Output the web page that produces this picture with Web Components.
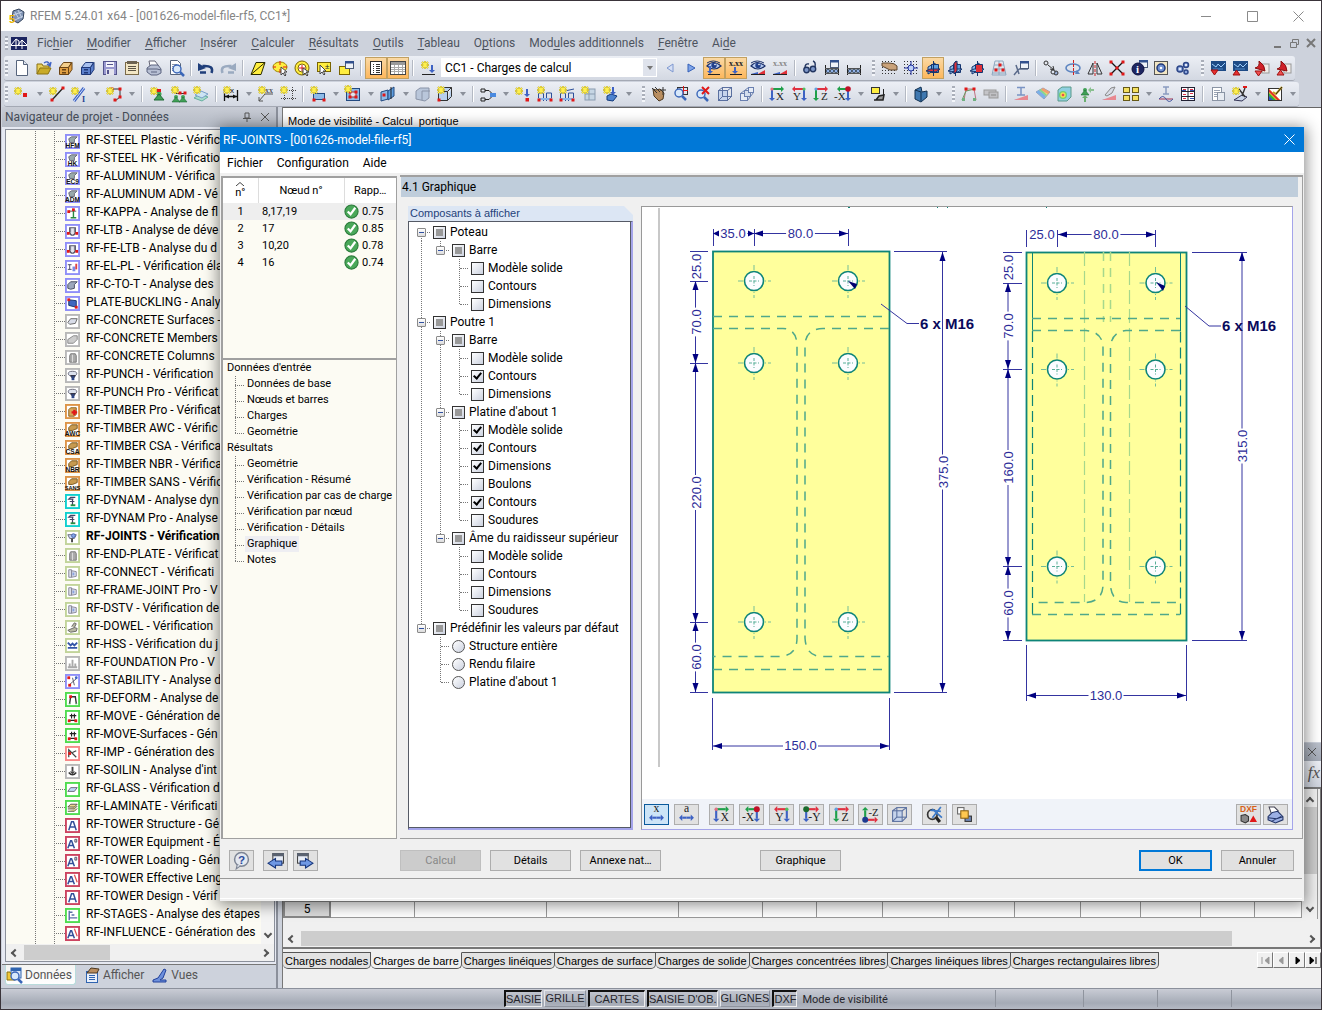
<!DOCTYPE html>
<html lang="fr">
<head>
<meta charset="utf-8">
<title>RFEM 5.24.01 x64</title>
<style>
html,body{margin:0;height:100%}
body{font:12px/18px Roboto,"Open Sans",sans-serif;color:#000;overflow:hidden}
</style>
</head>
<body>
<app-window></app-window>
<script>
const define=(tag,css,html,ready)=>customElements.define(tag,class extends HTMLElement{
  constructor(){super();this.attachShadow({mode:'open'});}
  connectedCallback(){
    this.shadowRoot.innerHTML=`<style>:host,*{box-sizing:border-box}${css}</style>`+(typeof html==='function'?html(this):html);
    if(ready)ready(this.shadowRoot,this);
  }
});

/* ---------- icon drawing helpers ---------- */
const R=(x,y,w,h,f,s)=>`<rect x="${x}" y="${y}" width="${w}" height="${h}" fill="${f||'none'}"${s?` stroke="${s}"`:''}/>`;
const P=(d,s,f,w)=>`<path d="${d}" fill="${f||'none'}"${s?` stroke="${s}" stroke-width="${w||1}"`:''}/>`;
const C=(x,y,r,f,s,w)=>`<circle cx="${x}" cy="${y}" r="${r}" fill="${f||'none'}"${s?` stroke="${s}" stroke-width="${w||1}"`:''}/>`;
const T=(x,y,t,sz,f,fam,b,a)=>`<text x="${x}" y="${y}" font-size="${sz}" fill="${f||'#222'}" font-family="${fam||'Liberation Sans'}" font-weight="${b||400}" text-anchor="${a||'start'}">${t}</text>`;
const star=(x,y)=>{const d=`M${x} ${y-4}v8M${x-4} ${y}h8M${x-3} ${y-3}l6 6M${x+3} ${y-3}l-6 6`;return P(d,'#a89838','none',2)+P(d,'#fff04a','none',1.2);};
const nd=(x,y)=>R(x-1.5,y-1.5,3,3,'#e01818');
const sup=(x,y)=>C(x,y-3,2,'#3fa055')+P(`M${x} ${y-3}l4 5h-8z`,'#1f6a35','#3fa055',.6);
const hA=(x1,x2,y,c)=>{const k=x2>x1?-3:3;return P(`M${x1} ${y}H${x2+k}`,c,'none',2)+P(`M${x2} ${y}l${k} -3v6z`,'',c);};
const vA=(x,y1,y2,c)=>{const k=y2>y1?-3:3;return P(`M${x} ${y1}V${y2+k}`,c,'none',2)+P(`M${x} ${y2}l-3 ${k}h6z`,'',c);};
const gr='#1fa04a',bl='#3d62c4',rd='#e03040',se='Liberation Serif';
const lens=(x,y)=>P(`M${x+3} ${y+3}l4 4`,'#3a66b8','none',2.5)+C(x,y,4,'#d8e8fa','#3a66b8',1.4);
const box=(f,e)=>P('M1.5 5.5h9v9h-9zM1.5 5.5l4-4h9l-4 4M14.5 1.5v9l-4 4',e,f);
const loads=()=>P('M1.5 5v10M14.5 5v10','#222')+P('M1 13.5h14M1 8.500h14','#555')+C(4,11,1.8,'#8fb0e8','#234',.8)+C(8,11,1.8,'#8fb0e8','#234',.8)+C(12,11,1.8,'#8fb0e8','#234',.8);
const eye=()=>P('M1 6q6-7 14 0q-7 6-14 0z','#1a2f6a','#b8ccf2',1.2)+C(8,5.5,2.7,'#22408c')+C(9,4.5,.8,'#fff')+P('M1 3q6-4 13 0','#1a2f6a');
const ramp=y=>P(`M1 ${y}l7-2v2z`,'','#3d62c4')+P(`M8 ${y}h7v-4z`,'','#e03038')+P(`M1 ${y+.5}h14`,'#222');
const ramp2=y=>P(`M1 ${y}h14l-7-1z`,'','#3d62c4')+P(`M1 ${y}l14-5v5z`,'','#e88890');
const axes3=f=>P('M3 7l7-4v7l-7 4z','#16346e','#8fc0ee')+P('M6.500 4.500h7v8h-7z','#16346e','#5e9ee0')+P('M1 11l4-2h10l-4 3z','#16346e',f)+P('M8.500 1v15','#16346e');
const dots=()=>{let o='';for(let i=1;i<16;i+=3)for(let j=1;j<16;j+=3)o+=R(i,j,1,1,'#333');return o;};
const portal=()=>P('M1.500 15V7h5v8M9.500 15V7h5v8','#2c4f9a')+P('M1 13h14','#88b3e8','none',2)+nd(2,14)+nd(14,14);
const cab=(a,b,c)=>P('M1.5 7.5l4-5h8l-3 5z',c,a)+P('M1.5 7.5h9v7h-9z',c,b)+P('M10.5 7.5l3.5-5v7l-3.5 5z',c,b)+R(4,9,4,1.5,c)+R(4,12,4,1.5,c);
const win=(x,y)=>R(x+.5,y+.5,8,7,'#eef2f8','#4a5a78')+R(x,y,9,2.5,'#31508e');
const bscreen=()=>R(1,1,15,10,'#1d4a86')+P('M2 4l4 3 2-3 3 3 4-4','#9fd0ff')+P('M3 9h10','#4f88c8');
const I={
 'axis-x':()=>hA(3,15,3,gr)+vA(3,3,15,bl)+T(7,14,'X',11,'#222',se)+C(3,3,1.6,'#e07080'),
 'axis-y':()=>hA(13,1,3,rd)+vA(13,3,15,bl)+T(2,14,'Y',11,'#222',se)+C(13,3,1.6,'#4fc060'),
 'axis-z':()=>hA(3,15,3,rd)+vA(3,3,15,gr)+T(8,14,'Z',11,'#222',se)+C(3,3,1.6,'#60a0e0'),
 'axis-minus-x':()=>hA(13,2,3,gr)+vA(13,4,15,bl)+T(-1,14,'-X',11,'#222',se)+C(13,3,2.8,'#c01028'),
 'axis-minus-y':()=>hA(4,15,3,rd)+vA(3,4,15,bl)+T(5,14,'-Y',11,'#222',se)+C(3,3,2.8,'#1a6a2c'),
 'axis-minus-z':()=>vA(3,13,1,gr)+hA(3,15,13,rd)+T(6,9,'-Z',10,'#222',se)+C(3,13,2.8,'#1d3a90'),
 'app':()=>P('M4 3l6-2 5 3-1 7-5 4-6-3z','#33435c','#7f93b4')+P('M6 4l4 7M9 2l4 8M4 7l9-3M6 12l8-4','#c6d2e6')+T(0,15,'5',11,'#e8b400','Liberation Sans',700),
 'bridge':()=>R(0,2,16,13,'#1c2560')+P('M0 10.500h16M5 14V4M11 14V5M0 10l5-6 3 2M7 10l4-5 5 5M8 6V10','#fff'),
 'new-file':()=>P('M2.500 .5h7l4 4v11h-11z','#56647c','#fff')+P('M9.500 .5v4h4','#56647c','#dde4f0'),
 'open':()=>P('M1 14V4h5l1 2h6v3','#8a7212','#e8cf5a')+P('M1 14l3-6h11l-3 6z','#8a7212','#c9ab28')+P('M8 3q4-3 6 2M15 2l-1 4-3-2','#3d62c4','none',1.4),
 'archive-open':()=>cab('#f4cf8c','#e0a044','#6b4414'),
 'archive-save':()=>cab('#a8c0ee','#5c80cc','#1f3878'),
 'save':()=>R(1.5,1.5,13,13,'#9a9ad0','#54548c')+R(4,2,8,5,'#f4f4fb')+R(4,9,8,6,'#e4e4ee')+R(5,10,2,4,'#54548c')+P('M5 4.500h6','#54548c'),
 'clipboard':()=>R(1.5,2.5,13,12,'#f2e6c4','#7a6a48')+R(3,1,10,3,'#6c6250')+P('M4 6.500h8M4 8.500h8M4 10.500h8','#5b5344'),
 'print':()=>P('M4 6L3 1h6l3 4','#667','#fff')+P('M1 8l4-3h7l3 4v4l-4 2H5l-4-3z','#5c6480','#b8c0d4')+P('M1 9h10l4 1M5 12h6','#5c6480'),
 'preview':()=>P('M2.5 .5h7l3 3v11h-10z','#56647c','#fff')+P('M4 4.500h5M4 6.500h6M4 8.500h3M4 10.500h3','#8894a8')+lens(9,9),
 'undo':()=>P('M2 12.5h6M13.5 13q3-8-9-7','#1f3e7a','none',2.500)+P('M0 3v8l8-3z','','#1f3e7a'),
 'redo':()=>P('M14 12.500h-6M2.500 13q-3-8 9-7','#9aaac0','none',2.500)+P('M16 3v8l-8-3z','','#9aaac0'),
 'select-para':()=>P('M1 14.500L6 2.500h9l-4 12z','#2a2a00','#ffee40')+P('M1 14.500L15 2.500','#2a2a00'),
 'select-ellipse':()=>`<ellipse cx="8" cy="7" rx="7" ry="5" fill="#ffee40" stroke="#a08400"/>`+P('M8 1v4M8 9v4M1 7h3M11 7h4','#e01818')+P('M9 7v8l2-2 2 3 1-1-2-3h3z','#444','#fff'),
 'select-ring':()=>C(8,8,7,'#ffee40','#7a6400')+C(8,8,4,'#fff','#7a6400')+P('M8 5v6M5 8h6','#e01818')+P('M9 8v7l2-2 2 3 1-1-2-3h3z','#444','#fff'),
 'select-plus':()=>R(1.5,2.5,13,9,'#ffee40','#7a6400')+T(9,9,'±',8)+P('M4 5v9l2-2 2 3 1-1-2-3h3z','#444','#fff'),
 'select-window':()=>R(1.5,6.5,10,8,'#ffee40','#7a6400')+win(7,1),
 'table-nav':()=>R(2.5,1.5,11,13,'#fff','#2c2c2c')+P('M5 4.5h1M8 4.5h4M5 6.5h1M8 6.5h4M5 8.5h1M8 8.5h4M5 10.5h1M8 10.5h4M5 12.5h1M8 12.5h4','#333'),
 'table':()=>R(.5,1.5,15,13,'#fff','#444')+R(1,2,14,3,'#9a9a9a')+P('M1 7.5h14M1 9.5h14M1 11.5h14M4.5 5v9M8.5 5v9M12.5 5v9','#aaa'),
 'new-load':()=>star(5,5)+vA(12,5,13,bl)+P('M2 14.500h13','#222'),
 'prev':()=>P('M11 4L5 8l6 4z','#7e98d0','#d6e0f6'),
 'next':()=>P('M4 4l7 4-7 4z','#3560b8','#7ea4e8'),
 'view-loads':()=>eye()+vA(4,6,14,bl)+P('M2 14.500h12','#222'),
 'view-values':()=>T(8,6,'x.xx',8,'#222',se,700,'middle')+vA(7,7,14,bl)+P('M2 14.500h12','#222'),
 'view-results':()=>eye()+ramp(14),
 'result-values':()=>T(8,6,'x.xx',8,'#888',se,700,'middle')+ramp(14),
 'glasses':()=>C(4.5,10,2.7,'#7c96c8','#223560',1.4)+C(11,9,2.7,'#7c96c8','#223560',1.4)+P('M3 8q0-5 4-4M13 7q1-5-2-6','#223560','none',1.4),
 'loads-window':()=>loads()+win(6,0),
 'loads':()=>loads(),
 'hand-grid':()=>dots()+P('M1 3h7q6 0 8 3v4H9L1 6z','#5c4630','#c9a27a'),
 'grid-snap':()=>dots()+P('M8 1v14M1 8h14','#2233a0')+C(8,8,3,'#bcd0f8','#2233a0'),
 'plane-xy':()=>axes3('#e03038'),'plane-yz':()=>axes3('#8fc0ee')+P('M7 3v11l3-3V1z','#16346e','#e03038'),'plane-xz':()=>axes3('#8fc0ee')+R(7,5,6,7,'#e03038'),
 'grid-red':()=>P('M4 1L1 15h14L12 1zM8 1v14M3 5h10M2 9h12M1 13h14','#8fa8c0')+nd(9,5)+nd(5,10)+nd(12,10),
 'axis-window':()=>P('M6 14L3 5M6 9h9M6 9l-5 6','#5a6a8a','none',1.5)+win(7,1),
 'renumber':()=>C(3,3,2,'none','#333')+P('M5 5l6 5M11 10l-1-4M11 10l-4-1','#333')+C(13,13,2,'#9ab0d8','#333')+C(10,12,2,'#dde4f0','#333'),
 'rotate':()=>`<ellipse cx="8" cy="8" rx="7" ry="4" fill="none" stroke="#5c84c0" stroke-width="1.6"/>`+P('M8.500 0v16','#d02020" stroke-dasharray="3 1')+P('M12 10l3 4-5 0z','','#5c84c0'),
 'mirror':()=>P('M6 3v11H1zM10 3v11h5z','#333','#dfe4ee')+P('M8 1v15','#d02020" stroke-dasharray="3 1'),
 'cross-nodes':()=>P('M2 2l12 12M14 2L2 14','#111','none',1.3)+nd(2,2)+nd(14,2)+nd(2,14)+nd(14,14)+nd(8,8),
 'info':()=>win(8,0)+C(7,9,6,'#1d2560','#0c1040')+T(5,13,'i',11,'#fff',se,700),
 'settings-img':()=>R(1.5,1.5,13,13,'#f2e6c4','#555')+C(8,8,4,'#6f8fd0','#223a78',1.5)+C(8,8,1.3,'#fff'),
 'gears':()=>C(5,9,3,'#8fa8dc','#2c4688',1.5)+C(11,5,2.5,'#8fa8dc','#2c4688',1.5)+C(11,12,2,'#8fa8dc','#2c4688',1.5)+C(5,9,1,'#fff')+C(11,5,1,'#fff'),
 'import-screen':()=>bscreen()+P('M1 10h7l-3.500 5z','#a01010','#e83030'),
 'export-screen':()=>bscreen()+P('M1 15h7l-3.500-5z','#a01010','#e83030'),
 'import-pdf':()=>R(8,4,7,9,'#f0ece8','#999')+P('M5 1q6 4 6 10L1 8q5-1 4-7z','#8a1010','#d02028')+P('M1 11h7l-3.500 5z','#a01010','#f05050'),
 'export-pdf':()=>R(8,4,7,9,'#f0ece8','#999')+P('M5 1q6 4 6 10L1 9q5-1 4-8z','#8a1010','#d02028')+P('M1 15h7l-3.500-5z','#a01010','#f05050'),
 'new-node':()=>star(4,5)+R(9,7,4,4,'#e01818'),
 'new-line':()=>P('M3 14L14 2','#222','none',1.3)+nd(3,14)+nd(14,2)+star(4,5),
 'new-member':()=>P('M3 15L13 2','#3d62c4','none',3)+P('M3 15L13 2','#cfe0ff')+star(4,5)+T(11,16,'I',8,'#1c3c90',se,700),
 'new-poly':()=>P('M6 3h8v8l-5 4','#333')+nd(6,3)+nd(14,3)+nd(14,11)+nd(9,14)+star(4,5),
 'support':()=>C(10,8,2.500,'#3fa055')+P('M10 8l5 6h-10z','#1f6a35','#3fa055')+star(5,5)+R(8,3,4,3,'#e01818'),
 'line-support':()=>P('M5 7.500h10','#333')+nd(9,7)+nd(14,7)+sup(5,14)+sup(12,14)+star(4,4),
 'surface-support':()=>P('M1 12l6-4 8 3-6 4z','#68b0a0','#a8dccc')+P('M2 9l6-4 7 3-6 4z','#78a0c8','#cce4f4')+star(4,4),
 'dimension':()=>P('M1.500 4v11M14.500 4v11M2 10.500h12','#111','none',1.3)+P('M2 10.500l4-2v4zM14 10.500l-4-2v4z','','#111')+star(4,4)+T(7,7,'x',8,'#111'),
 'comment':()=>P('M1 15l6-7h8M1 15v-4M1 15h4','#555')+T(7,7,'xx',8,'#222',se)+star(4,4),
 'frame-grid':()=>P('M4.500 1v14M12.500 1v14M1 4.500h15M1 12.500h15','#444" stroke-dasharray="1 1')+star(4,4),
 'new-surface':()=>R(3.5,7.5,11,6,'#8ebbe8','#234a80')+nd(4,14)+nd(14,14)+star(4,4),
 'opening':()=>R(1.5,2.5,13,12,'#8ebbe8','#234a80')+R(5,6,6,5,'#dfe5ee','#a03030')+nd(5,6)+nd(11,6)+nd(5,11)+nd(11,11)+star(3,3),
 'intersect':()=>P('M1 6l7-2v9l-7 2z','#234a80','#8ebbe8')+P('M8 5l6-4v9l-6 4z','#234a80','#5e9ee0')+P('M11 1v12','#222')+nd(4,9),
 'solid':()=>P('M1 5l4-3h9v10l-4 3-9-2z','#8a94a8','#b9c6da')+P('M7 5h8M7 5v9','#8a94a8'),
 'new-solid':()=>box('#b8d0ee','#333')+star(4,4)+nd(2,14),
 'coupling':()=>P('M1 3h4v3H1zM1 12h4v3H1zM5 4.500h4l3 3M5 13.500h4l3-3','#222')+R(10,7,6,4,'#4a8ae0'),
 'nodal-load':()=>star(4,5)+vA(12,3,11,bl)+R(10.500,12,3.500,3.500,'#e01818'),
 'member-load':()=>portal()+star(4,4),'line-load':()=>portal()+P('M1 6l14-3','#2c4f9a')+star(4,4),
 'free-load':()=>R(4,3,10,11,'#c6d6e4','#8a9cb0')+P('M4 8h10M8 3v11','#8a9cb0')+star(4,4),
 'solid-load':()=>P('M4 10l4-2 6 2-4 5-6-1z','#123a7c','#4f84d0')+vA(10,1,9,bl)+star(4,4),
 'pan':()=>P('M2 3l3 1 4-1 4 4-1 6-4 2-5-5z','#4c3820','#b98e60')+P('M12 1v8M9 4h6M1 2l5 5M4 1l5 5','#333'),
 'zoom-window':()=>R(4.500,1.500,10,7,'none','#333')+P('M10.500 0v8M7 4.500h8','#e01818')+lens(6,7),
 'zoom-reset':()=>lens(6,8)+P('M7 1l7 7M14 1L7 8','#e01818','none',2),
 'cube':()=>R(1.5,4.5,9,10,'#c6d4ec','#5a70a0')+R(5.500,1.500,9,9,'none','#5a70a0')+P('M1.500 4.500l4-3M10.500 4.500l4-3M1.500 14.500l4-4M10.500 14.500l4-4','#5a70a0'),
 'cube-part':()=>R(1.5,7.5,7,7,'#e6ecf6','#6a80b0')+R(5.500,4.500,6,6,'#d4deee','#6a80b0')+R(9.500,1.500,5,5,'#e6ecf6','#6a80b0')+P('M1.500 7.500l8-6M8.500 14.500l6-8','#6a80b0'),
 'visibility':()=>R(1.500,1.500,8,6,'#ffee40','#333')+P('M4 14h9l1-5-5 1-3 4','#222','#999',1.500)+P('M13.500 3v9','#222'),
 'render':()=>P('M2 4l6-3 1 5 5-1v6l-6 5-6-3z','#123050','#3f78b0')+P('M2 4l6 2v9','#123050'),
 'deform':()=>P('M3 14L5 3h8l2 11','#c07080')+P('M1 14L5 5l9-2','#6a9a60')+nd(5,3)+nd(13,3)+R(1,12,3,3,'#70b080')+R(12,12,3,3,'#70b080'),
 'disabled-tool':()=>R(1,4,12,5,'#c4c4c8','#999')+R(6,6,9,6,'#c0c0c4','#999')+P('M8 9h5','#888'),
 'member-forces':()=>P('M4 1.500h8M8 1v8M4 9h8','#7a94c4','none',1.5)+ramp2(14),
 'surface-res':()=>P('M1 6l7-4 7 4-6 7z','#99b','#f0e070')+P('M1 6l3-2 7 6-2 3z','','#7ab0e8')+P('M4 4l2-1 6 6-1 1z','','#80d890')+P('M8 2l7 4-2 2-7-4z','','#f0a070'),
 'solid-res':()=>P('M1 4l4-3h9v10l-4 4H1z','#5a9a8a','#8fd0e0')+C(6,9,4,'#70d070')+C(6,9,2.7,'#f0e050')+C(6,9,1.3,'#e85050'),
 'reaction':()=>sup(6,7)+vA(6,16,9,'#6ab070')+hA(15,9,4,'#8ac090'),
 'section-res':()=>P('M4 9l6-7 4-1-3 6-5 3z','#888','#d8dce6')+ramp2(14),
 'windows':()=>[[.5,1.5],[9.5,1.5],[.5,9.5],[9.5,9.5]].map(a=>R(a[0],a[1],6,5,'#f4e060','#665a18')).join(''),
 'influence':()=>P('M5 1h6M8 1v7M5 8h6','#8a9cc0','none',1.5)+P('M1 13h14','#a03050')+P('M1 13q4-5 7 0t7 0','#4a5aa0'),
 'result-table':()=>R(1.500,1.500,13,13,'#fff','#223')+P('M1 5.500h14M1 10.500h14M8 1v14','#223')+P('M3 3.500h3M10 3.500h3M3 8.500h3M10 7.500h3M3 12.500h3','#e03048')+P('M2 4.500h4M10 4.500h4M10 12.500h4','#3454b0'),
 'report':()=>R(2.5,1.5,9,13,'#fff','#8a94a4')+P('M4 4.500h6M4 6.500h6M4 8.500h4M4 10.500h4','#9aa4b4')+R(7.500,6.500,7,8,'#e8ecf2','#8a94a4'),
 'script':()=>P('M2 14l8-5 5 2-5 4z','#335','#c8d4e8')+P('M7 3l6 8M13 2l-3 8','#333','none',1.4)+P('M11 1h4','#e01818','none',2)+star(4,5),
 'colors':()=>R(1.5,2.5,13,12,'#fff','#333')+P('M2 14V3l11 11z','','#ffe020')+P('M2 14V7l7 7z','','#30b040')+P('M2 14v-4l4 4z','','#3050d0')+P('M2 6V3l11 11h-3z','','#e03030')+P('M15 1L9 8l-3-2','#c8a020','none',2)+P('M15 1L9 8','#222'),
 'data':()=>R(5,1,10,10,'#dbe6f6','#2f64b0')+R(5,1,10,3,'#2f64b0')+P('M1 13V5h3l1 2h4v6z','#8a7212','#f0c838')+lens(9,9),
 'display':()=>R(2.500,4.500,11,11,'#eaf0fa','#2f64b0')+P('M5 8.500h6M5 10.500h6M5 12.500h6','#2f64b0')+P('M3 6l4-5 8 1-2 4z','#4c3820','#b98e60'),
 'views':()=>P('M1 13l5-2 6-9 2 1-3 8-3 2h6v2H1z','#22409a','#6d90dc'),
 'help':()=>C(8,7,6.500,'#e4e8f0','#7c8494',1.4)+P('M4 12l-1 4 4-3','#7c8494','#e4e8f0')+T(8,11,'?',11,'#2b4c9c','Liberation Sans',700,'middle'),
 'go-back':()=>R(5.5,1.5,10,9,'#e8edf6','#444')+R(5,1,11,3,'#5a6270')+P('M8 15v-2.500h6v-4H8V6l-7 4.500z','#16357c','#6f98e4'),
 'go-next':()=>R(.5,1.500,10,9,'#e8edf6','#444')+R(0,1,11,3,'#5a6270')+P('M8 15v-2.500H3v-4h5V6l7 4.500z','#16357c','#6f98e4'),
 'dim-x':()=>T(8,6,'x',11,'#222',se,400,'middle')+hA(8,1,11,bl)+hA(8,15,11,bl),
 'dim-a':()=>T(8,6,'a',11,'#222',se,400,'middle')+hA(8,1,11,bl)+hA(8,15,11,bl),
 'search-off':()=>P('M9 10l4 5','#222','none',3)+C(6,8,4.500,'none','#333',1.600)+P('M6 3l9 8M14 1L6 11M4 4l10 1','#3d7ac8','none',1.600),
 'layers':()=>R(1.500,1.500,6,6,'#fff','#666')+R(8.500,9.500,6,5,'#6f87b8','#333')+R(4.500,4.500,7,7,'#ffc850','#8a6010'),
 'dxf':()=>T(8,6,'DXF',8,'#d86018','Liberation Sans',700,'middle')+P('M1 9l4-1 3 2v4l-3 2-4-2z','#333','#888')+P('M9 15h7l-3.500-6z','','#e01818'),
 'print-blue':()=>P('M4 7L2 1h5l4 4','#445','#fff')+P('M1 10l4-4 5-1 5 5v3l-7 3-7-3z','#223468','#9cb0e4')+P('M1 11l8 1 6-2M5 14l8-4','#223468'),
 'ok':()=>C(8,8,7,'#4aa85a','#2c7c3c',1.200)+P('M4 8l3 3 5-7','#fff','none',2.400),
};
/* module glyphs of the project tree, drawn inside a coloured frame */
const tag=t=>T(8,15,t,t.length>3?6:7,'#111','Liberation Sans',700,'middle');
const G={
 lab:t=>P('M4 5l3-2h6l-3 3v3H5z','#667','#9aa')+tag(t),
 wood:t=>P('M4 6l3-3h6v4l-5 2H4z','#7a5a20','#c79a50')+tag(t),
 kappa:()=>P('M9 4v8M6 12.500h6','#2a8a40','none',1.500)+P('M4 5.500h8','#555')+nd(9,4)+nd(4,6),
 ltb:()=>P('M5 4v5q1 3 3 3t3-3V4z','#556','#e4e6ee',1.300)+P('M6 4v5M10 4v5','#778')+nd(3.500,10)+nd(12.500,10),
 elpl:()=>P('M3 5h4M5 5v5M3 10h4','#446')+R(8,7,3,5,'#7a8ae8')+R(11,4,2,6,'#e04040'),
 beam:()=>P('M3 7l3-3h7l-3 3v4l-4 1-3-1z','#444c60','#9ca8bc'),
 plate:()=>P('M4 4l8 1v7l-8-2z','#16346e','#3f66c0')+nd(4,4)+nd(12,12),
 slab:()=>P('M3 9l3-4h7l-2 5-6 1z','#666','#d8dce8'),
 block:()=>P('M3 8l6-4h4v4l-4 4H3z','#888','#ccc'),
 col:()=>P('M5 6l1-2h5l1 2v7H5z','#777','#aaa')+P('M8 5v8','#ddd'),
 punch:()=>`<ellipse cx="8" cy="6" rx="4.500" ry="2.500" fill="#dce2ee" stroke="#667"/>`+P('M6 8l1 2h3l1-2z','#334','#2c4688')+R(7,10,3,3,'#2c4688'),
 cross:()=>P('M4 6l2-2h6v7l-2 2H4z','#8a6020','#d8a858')+P('M10 6v6M7 9h6','#e01818','none',2.500),
 dyn:()=>P('M8 12V5M11 3.500H6l-2 2h5M5 8h5','#446','none',1.300)+R(6,11,5,2,'#2a8a40'),
 joint:()=>P('M3 5h9l-2 4H5z','#667','#c9d8f4')+C(9,6,2,'#88a8e8','#4868b0')+P('M7.500 9v4','#444','none',2),
 pl:()=>P('M4 4h3v8H4zM7 5l5 1v5l-5 1z','#889','#dde0ea')+R(8,7,2,3,'#8aa4e0'),
 dowel:()=>P('M3 11l7-3 3 1-1 3-6 1zM7 7l3-4 2 1-2 4','#666','#b8b8a4'),
 hss:()=>P('M3 5l3 3 2-2 2 2 3-3M3 10.500h10','#3455a8','none',2),
 found:()=>P('M3 12h10M5 12V8M8 12V4M11 12V8','#aaa','none',2),
 stab:()=>P('M4 12L12 5M8 4l2 8','#556')+nd(4,4)+nd(5,12)+C(12,4,1.500,'#3d62c4'),
 frame:()=>P('M5 12l1-7h5l1 7','#333','none',1.500)+nd(6,5)+R(4,12,2,1,'#2a8a40')+R(11,12,2,1,'#2a8a40'),
 move:()=>P('M7 4v5M10 4v5M5 6h7M4 11h8','#222','none',1.200)+nd(4.500,11.500)+nd(11.500,11.500),
 imp:()=>P('M4 12V4l8 8M8 7l4-2','#444','none',1.300)+nd(5,8),
 soil:()=>P('M4 9q4 5 8 0','#333','none',1.500)+vA(8,3,11,'#444'),
 glass:()=>P('M3 10l3-4h7l-3 4z','#667','#c0d8f8'),
 lam:()=>P('M3 7.500l3-3h7l-3 3zM3 9.500h7l3-3M3 12h7l3-3','#554','#ead890'),
 tower:()=>P('M4 13L7 4h2l3 9M5 9.500h6','#34509a','none',1.600),
 tower2:()=>P('M3 13L6 5h1l3 8M4 10h5','#34509a','none',1.600)+P('M10.500 3.500h2v3h-2z','#556','#dde'),
 tower3:()=>P('M3 13L6 5h1l3 8M4 10h5','#34509a','none',1.600)+P('M10 3l3 8','#e05050','none',1.300),
 stages:()=>P('M4.500 3v10M4 4.500h4M7 7.500h3M4 10.500h9','#5a70a8','none',1.500),
};
define('rf-icon',`:host{display:inline-flex;flex:none;width:16px;height:16px}svg{width:100%;height:100%;display:block;overflow:visible}`,
 el=>{
  const n=el.getAttribute('name'),f=el.getAttribute('frame');
  if(f){const[g,l]=n.split(':');return `<svg viewBox="0 0 16 16" aria-hidden="true">${R(1,1,14,14,'#fff')}<rect x="1" y="1" width="14" height="14" fill="none" stroke="${f}" stroke-width="2"/>${G[g](l)}</svg>`;}
  return `<svg viewBox="0 0 16 16" aria-hidden="true">${I[n]()}</svg>`;
 });

/* ---------- toolbar: '|' separator, ':' grip, 'v' menu arrow, '*' pressed ---------- */
define('tool-bar',`
 :host{display:flex;align-items:center;height:26px;padding-left:3px;background:#cdd2dc}
 .strip{display:flex;align-items:center;height:25px;background:linear-gradient(#eceff5,#d3d8e2);border-bottom:1px solid #a4a9b4;border-radius:3px}
 button{flex:none;width:22px;height:22px;padding:0;border:0;background:none;display:flex;align-items:center;justify-content:center}
 button.on{background:linear-gradient(#fbd9a4,#fdb75c);border:1px solid #c2a060}
 button.v{width:13px}button.v::before{content:"";border:3px solid transparent;border-top:4px solid #8b909a;border-bottom:0}
 .sep{flex:none;width:2px;height:16px;margin:0 3px;background:#b4b9c3;border-right:1px solid #fff}
 .grip{flex:none;width:3px;height:16px;margin:0 3px 0 7px;background:repeating-linear-gradient(#a9aeb9 0 2px,#f4f6fa 2px 4px)}
 .grip:first-child{margin:0 3px 0 1px}`,
 el=>'<div class="strip">'+el.getAttribute('items').trim().split(/\s+/).map(t=>
  t==='|'?'<span class="sep"></span>':t===':'?'<span class="grip"></span>':t==='v'?'<button class="v" aria-label="menu"></button>':
  t==='slot'?'<slot></slot>':`<button class="${t[0]==='*'?'on':''}" aria-label="${t.replace('*','')}"><rf-icon name="${t.replace('*','')}"></rf-icon></button>`).join('')+'</div>');

define('load-case',`
 :host{display:block;width:216px;margin:0 2px;position:relative}
 select{appearance:none;width:100%;height:19px;border:0;border-radius:0;background:#fff;font:12px Roboto,sans-serif;padding:0 4px;color:#000}
 i{position:absolute;right:1px;top:1px;width:13px;height:17px;background:#dfe3ec;pointer-events:none;display:grid;place-items:center}
 i::before{content:"";border:3px solid transparent;border-top:4px solid #777;border-bottom:0}`,
 `<select aria-label="Cas de charge"><option>CC1 - Charges de calcul</option></select><i></i>`);

define('menu-bar',`
 :host{display:flex;align-items:center}
 nav{display:flex;gap:var(--gap,14px)}`,
 `<nav><slot></slot></nav>`);

define('title-bar',`
 :host{display:flex;align-items:center;height:30px;background:#fff;color:#858585;padding-left:8px}
 span{flex:1;margin-left:5px}
 button{border:0;background:none;width:46px;height:30px;padding:0;display:grid;place-items:center}
 svg{width:11px;height:11px;fill:none;stroke:#8a8a8a}`,
 `<rf-icon name="app"></rf-icon><span><slot></slot></span>
 <button aria-label="Réduire"><svg><path d="M0 5.500h10"/></svg></button>
 <button aria-label="Agrandir"><svg><path d="M.5.5h10v10H.5z"/></svg></button>
 <button aria-label="Fermer"><svg><path d="M.5.5l10 10M10.500.5l-10 10"/></svg></button>`);

/* ---------- project navigator ---------- */
const V='#8f8ff8',GY='#b8b8b8',OR='#dd9448',CY='#10d0d0',LG='#c2d49a',GN='#50dc50',PK='#f88888',RD='#cc4460';
const MODULES=[
['RF-STEEL Plastic - Vérifica',V,'lab:HFM'],['RF-STEEL HK - Vérificatio',V,'lab:HK'],['RF-ALUMINUM - Vérifica',V,'lab:EC9'],['RF-ALUMINUM ADM - Vé',V,'lab:ADM'],
['RF-KAPPA - Analyse de fl',V,'kappa'],['RF-LTB - Analyse de déve',V,'ltb'],['RF-FE-LTB - Analyse du d',V,'ltb'],['RF-EL-PL - Vérification éla',V,'elpl'],
['RF-C-TO-T - Analyse des',V,'beam'],['PLATE-BUCKLING - Analy',V,'plate'],['RF-CONCRETE Surfaces -',GY,'slab'],['RF-CONCRETE Members',GY,'block'],['RF-CONCRETE Columns',GY,'col'],
['RF-PUNCH - Vérification',GY,'punch'],['RF-PUNCH Pro - Vérificat',GY,'punch'],['RF-TIMBER Pro - Vérificat',OR,'cross'],['RF-TIMBER AWC - Vérific',OR,'wood:AWC'],['RF-TIMBER CSA - Vérifica',OR,'wood:CSA'],
['RF-TIMBER NBR - Vérifica',OR,'wood:NBR'],['RF-TIMBER SANS - Vérific',OR,'wood:SANS'],['RF-DYNAM - Analyse dyn',CY,'dyn'],['RF-DYNAM Pro - Analyse',CY,'dyn'],['RF-JOINTS - Vérification',LG,'joint'],
['RF-END-PLATE - Vérificat',LG,'col'],['RF-CONNECT - Vérificati',LG,'pl'],['RF-FRAME-JOINT Pro - V',LG,'pl'],['RF-DSTV - Vérification de',LG,'pl'],['RF-DOWEL - Vérification',LG,'dowel'],['RF-HSS - Vérification du j',LG,'hss'],
['RF-FOUNDATION Pro - V',GY,'found'],['RF-STABILITY - Analyse d',V,'stab'],['RF-DEFORM - Analyse de',GN,'frame'],['RF-MOVE - Génération de',GN,'move'],['RF-MOVE-Surfaces - Gén',GN,'move'],['RF-IMP - Génération des',PK,'imp'],
['RF-SOILIN - Analyse d\'int',GY,'soil'],['RF-GLASS - Vérification d',GN,'glass'],['RF-LAMINATE - Vérificati',GN,'lam'],['RF-TOWER Structure - Gé',RD,'tower'],['RF-TOWER Equipment - É',RD,'tower2'],
['RF-TOWER Loading - Gén',RD,'tower2'],['RF-TOWER Effective Leng',RD,'tower3'],['RF-TOWER Design - Vérif',RD,'tower'],['RF-STAGES - Analyse des étapes',GN,'stages'],['RF-INFLUENCE - Génération des',RD,'tower3']];
define('scroll-h',`:host{display:flex;align-items:center;height:17px;background:#f0f0f0}
 i{flex:none;width:18px;display:grid;place-items:center}i::before{content:"";width:4px;height:4px;border:solid #555;border-width:0 0 2px 2px;transform:rotate(45deg)}i:last-child::before{transform:rotate(225deg)}
 .t{flex:1;height:15px}.t b{display:block;height:100%;width:var(--thumb);background:#cdcdcd}`,`<i></i><div class="t"><b></b></div><i></i>`);
define('project-nav',`
 :host{display:flex;flex-direction:column;flex:none;width:276px;background:#e6e9f2;border-right:2px solid #8b909b}
 header{display:flex;align-items:center;height:20px;padding:0 6px 0 3px;background:linear-gradient(#c8ccd5,#b4bac5);color:#444b57}
 header span{flex:1}header svg{width:10px;height:10px;margin-left:8px;fill:none;stroke:#555}
 .box{flex:1;min-height:0;display:flex;flex-direction:column;margin:2px 1px 0 3px;border:1px solid #8b909b;background:#fcfbf3}
 .area{flex:1;min-height:0;display:flex}
 ul{flex:1;min-width:0;overflow:hidden;list-style:none;margin:0;padding:1px 0 0 29px}
 li{--d:repeating-linear-gradient(#777 0 1px,transparent 1px 2px);display:flex;height:18px;align-items:center;white-space:nowrap;padding-left:19px;background:var(--d) 0 0/1px 100% no-repeat,var(--d) 19px 0/1px 100% no-repeat}
 li::before{content:"";flex:none;align-self:stretch;width:11px;height:10px;border-bottom:1px dotted #777}
 a{color:#000;text-decoration:none;margin-left:6px}li.cur a{font-weight:700}
 li rf-icon{width:15px;height:15px;margin-top:2px}
 .v{flex:none;width:13px;background:#f4f4f4;display:flex;align-items:end;justify-content:center}
 .v::before{content:"";width:4px;height:4px;border:solid #555;border-width:0 2px 2px 0;transform:rotate(45deg);margin-bottom:7px}
 footer{display:flex;height:24px;margin-top:2px;background:#cdd2dc;border-top:1px solid #777;padding-left:3px;gap:8px}
 footer a{display:flex;align-items:center;color:#555;gap:3px;margin:0;height:20px}
 footer a:first-child{background:linear-gradient(#f4f4f2,#fff);border:1px solid #b9dcdc;border-top:0;padding-right:3px;border-radius:0 0 3px 3px}`,
 `<header><span>Navigateur de projet - Données</span><svg><path d="M3 1h4v5H3zM1 6.500h8M5 7v3"/></svg><svg><path d="M1 1l8 8M9 1L1 9"/></svg></header>
 <div class="box"><div class="area"><ul>${MODULES.map(m=>`<li${/JOINTS/.test(m[0])?' class="cur"':''}><rf-icon frame="${m[1]}" name="${m[2]}"></rf-icon><a href="#">${m[0]}</a></li>`).join('')}<li><rf-icon frame="${V}" name="col"></rf-icon></li></ul><div class="v"></div></div>
 <scroll-h style="--thumb:37%"></scroll-h></div>
 <footer><a href="#"><rf-icon name="data"></rf-icon>Données</a><a href="#"><rf-icon name="display"></rf-icon>Afficher</a><a href="#"><rf-icon name="views"></rf-icon>Vues</a></footer>`);

/* ---------- work area and load table ---------- */
const COLS=[84,132,132,84,54,66,66,66,66,60,60,54,47];
const SHEETS=['Charges nodales','Charges de barre','Charges linéiques','Charges de surface','Charges de solide','Charges concentrées libres','Charges linéiques libres','Charges rectangulaires libres'];
define('work-area',`
 :host{display:flex;flex-direction:column;min-width:0;background:#f0f0f0;border-left:1px solid #777}
 .view{flex:1;background:#fff;border-top:1px solid #666;padding:4px 5px;font:11px/18px "Liberation Sans",sans-serif;white-space:pre}
 .head{height:19px;background:linear-gradient(#b9bfca,#a2a9b5);display:flex;align-items:center;justify-content:end;padding-right:4px;border-top:1px solid #cdd2dc}
 .head svg{width:10px;height:10px;stroke:#555}
 .fx{height:26px;background:linear-gradient(#eceff5,#cfd4de);display:flex;justify-content:end;font:italic 17px/24px "Liberation Serif",serif;color:#555;padding-right:1px}
 .grid{height:162px;border:2px solid #777;border-left:0;border-right-width:1px;display:flex;flex-direction:column}
 .rows{flex:1;display:flex;min-height:0}
 .cells{flex:1;overflow:hidden;display:flex;flex-direction:column;justify-content:end}
 table{border-collapse:collapse;table-layout:fixed;width:1017px;background:#fff;margin:0 0 12px}
 th{width:46px;background:#dadada;border:2px solid #888;font-weight:400;padding:0;line-height:12px}td{border:1px solid #999;height:16px;padding:0}
 .v{flex:none;width:15px;margin-right:2px;border-right:1px solid #999;display:flex;flex-direction:column;align-items:center;margin-bottom:11px}
 .v i{width:6px;height:6px;border:solid #555;border-width:2px 0 0 2px;transform:rotate(45deg);margin:9px 0 3px}
 .v i:last-child{transform:rotate(225deg);margin:0 0 8px}.v b{flex:1;width:100%;background:linear-gradient(#cdcdcd 68%,#f0f0f0 68%)}
 .tabs{display:flex;align-items:start;height:38px;padding:2px 0 0;font:11px/16px "Liberation Sans",sans-serif;margin-top:1px}
 .tabs button{border:1px solid #555;border-left-width:0;background:#e2e2e2;padding:0 2px;font:inherit;height:17px;white-space:nowrap;border-radius:0 0 5px 5px}
 .tabs button.on{background:#f0f0f0;border-top-color:#f0f0f0}
 .tabs span{flex:1}.tabs button.n{width:16px;height:16px;padding:0;border:1px solid;border-color:#fff #777 #777 #fff;border-radius:0;display:grid;place-items:center;background:#f0f0f0}
 .n svg{width:9px;height:9px}`,
 `<div class="view">Mode de visibilité - Calcul  portique</div>
 <div class="head"><svg><path d="M1 1l8 8M9 1L1 9"/></svg></div><div class="fx">fx</div>
 <div class="grid"><div class="rows"><div class="cells"><table><colgroup><col style="width:46px">${COLS.map(w=>`<col style="width:${w}px">`).join('')}</colgroup><tr><th scope="row">5</th>${COLS.map(()=>'<td></td>').join('')}</tr></table></div><div class="v"><i></i><b></b><i></i></div></div>
 <scroll-h style="--thumb:93%"></scroll-h></div>
 <div class="tabs">${SHEETS.map((s,i)=>`<button${i===1?' class="on"':''}>${s}</button>`).join('')}<span></span>${['M1 1v7M8 1L4 4.500 8 8z','M6 1L2 4.500 6 8z','M3 1l4 3.500L3 8z','M1 1l4 3.500L1 8zM7 1v7'].map((d,i)=>`<button class="n" aria-label="Feuille ${i+1}"><svg><path d="${d}" fill="${i<2?'#999':'#000'}" stroke="${i<2?'#999':'#000'}"/></svg></button>`).join('')}</div>`);

define('status-bar',`
 :host{display:flex;height:21px;padding:1px 2px 2px 503px;gap:2px;background:linear-gradient(#c9ccd5,#a5abb6 70%,#b5bac4);border-top:1px solid #8b909b;color:#26262c}
 button{font:11px/13px "Liberation Sans",sans-serif;color:inherit;padding:0;border:1px solid;border-color:#e4e6ea #8f949e #8f949e #e4e6ea;background:none}
 button.on{border-color:#111 #eee #eee #111;border-width:2px 1px 1px 2px}button.w{padding:0 5px}
 span{flex:1;padding:2px 0 0 3px;white-space:nowrap;line-height:16px;font-size:11px}
 i{border-left:1px solid #8f949e}i:nth-of-type(1){width:86px}i:nth-of-type(2),i:nth-of-type(3){width:72px}i:nth-of-type(4){width:88px}`,
 `<button class="on">SAISIE</button><button>GRILLE</button><button class="on w">CARTES</button><button class="on">SAISIE D'OB.</button><button>GLIGNES</button><button class="on">DXF</button><span>Mode de visibilité</span><i></i><i></i><i></i><i></i>`);

/* ---------- dialog parts ---------- */
define('node-table',`
 :host{display:block;flex:none;height:182px;background:#fcfbf3;border:2px solid #a0a0a0;border-right-width:1px;border-bottom:0;font-size:11px}
 table{width:100%;border-collapse:collapse;table-layout:fixed}
 th{background:#fff;font-weight:400;height:25px;padding:0;border-right:1px solid #ddd;line-height:13px}
 th:last-child{border:0}th svg{display:block;width:8px;height:4px;margin:0 auto;fill:none;stroke:#444}
 td{height:17px;line-height:17px;padding:0 0 0 4px}td:first-child{text-align:center;padding:0}
 tr.sel td{background:#eee}td div{display:flex;align-items:center;gap:3px;height:17px}td:last-child{padding:0}td rf-icon{width:15px;height:15px}`,
 `<table><colgroup><col style="width:35px"><col style="width:86px"><col></colgroup><thead><tr><th><svg><path d="M0 4l4-3.500L8 4"/></svg>n°</th><th>Nœud n°</th><th>Rapp…</th></tr></thead><tbody>
 ${[['8,17,19','0.75'],['17','0.85'],['10,20','0.78'],['16','0.74']].map((r,i)=>`<tr${i?'':' class="sel"'}><td>${i+1}</td><td>${r[0]}</td><td><div><rf-icon name="ok"></rf-icon>${r[1]}</div></td></tr>`).join('')}</tbody></table>`);

const NAV=[['Données d\'entrée',['Données de base','Nœuds et barres','Charges','Geométrie']],['Résultats',['Geométrie','Vérification - Résumé','Vérification par cas de charge','Vérification par nœud','Vérification - Détails','Graphique','Notes']]];
define('dialog-nav',`
 :host{display:block;flex:1;background:#fcfbf3;border:2px solid #a0a0a0;border-width:2px 1px 1px 2px;font-size:11px;line-height:16px;padding-left:4px}
 ul{list-style:none;margin:0;padding:0}ul ul{padding-left:8px}
 li li{display:flex;background:repeating-linear-gradient(#777 0 1px,transparent 1px 2px) 0 0/1px 100% no-repeat}
 li li:last-child{background-size:1px 9px}
 li li::before{content:"";flex:none;width:9px;height:9px;border-bottom:1px dotted #777;margin-right:1px}
 a{color:#000;text-decoration:none;padding:0 2px;white-space:nowrap}a.on{background:#eeeef2}`,
 `<ul>${NAV.map(g=>`<li>${g[0]}<ul>${g[1].map(x=>`<li><a href="#"${x==='Graphique'?' class="on"':''}>${x}</a></li>`).join('')}</ul></li>`).join('')}</ul>`);

/* guides: '|' line, 'T' branch, 'L' last branch, ' ' blank, 'b' expander with line below, 'm' with line above, '+' with both
   state: 1 ticked, 0 clear, 2 mixed, r radio */
const PARTS=['b2Poteau','|m2Barre','| T0Modèle solide','| T0Contours','| L0Dimensions','+2Poutre 1','|+2Barre','||T0Modèle solide','||T1Contours','||L0Dimensions','|+2Platine d\'about 1','||T1Modèle solide','||T1Contours','||T1Dimensions','||T0Boulons','||T1Contours','||L0Soudures','|m2Âme du raidisseur supérieur','| T0Modèle solide','| T0Contours','| T0Dimensions','| L0Soudures','m2Prédéfinir les valeurs par défaut',' TrStructure entière',' TrRendu filaire',' LrPlatine d\'about 1'];
const GUIDE={'|':'vl','T':'tee','L':'last','b':'h first','m':'h mid','+':'h plus',' ':''};
define('part-tree',`
 :host{display:flex;flex-direction:column;width:225px;flex:none}
 h3{margin:0;font:11px/15px "Liberation Sans",sans-serif;color:#24427a;background:#dce6f4;padding-left:2px;clip-path:polygon(0 0,96% 0,100% 60%,100% 100%,0 100%);height:15px}
 .list{flex:1;background:#fff;border:1px solid #555a66;border-right:2px solid #a4a4ea;border-bottom:2px solid #a4a4ea;box-shadow:inset -1px -1px #555a66;padding:1px 0 0 3px}
 .row{display:flex;height:18px;align-items:center;white-space:nowrap}
 .c{flex:none;width:19px;height:18px;position:relative;--d:repeating-linear-gradient(#777 0 1px,transparent 1px 2px)}
 .vl,.tee,.plus{background:var(--d) 9px 0/1px 100% no-repeat}.last,.mid{background:var(--d) 9px 0/1px 10px no-repeat}.first{background:var(--d) 9px 9px/1px 9px no-repeat}
 .c.h{display:flex;align-items:center;justify-content:center}
 .tee::after,.last::after,.h::after{content:"";position:absolute;left:10px;right:1px;top:9px;border-top:1px dotted #777}
 .h::before{content:"";position:relative;z-index:1;width:7px;height:7px;border:1px solid #8a8a8a;border-radius:1px;background:linear-gradient(#3050a0,#3050a0) center/5px 1px no-repeat,linear-gradient(#fff,#dcdcdc)}
 input{appearance:none;width:13px;height:13px;margin:0 4px 0 2px;border:1px solid #333;background:linear-gradient(135deg,#fff,#ccd2e0);display:grid;place-items:center}
 input[type=radio]{border-radius:50%;border-color:#555}
 input:checked::before{content:"";width:3px;height:6px;border:solid #000;border-width:0 2px 2px 0;transform:rotate(40deg);margin-top:-2px}
 input:indeterminate[type=checkbox]::before{content:"";width:7px;height:7px;background:#999}
 label{display:flex;align-items:center}`,
 `<h3>Composants à afficher</h3><div class="list">${PARTS.map(s=>{
   const m=s.match(/^([|TLbm+ ]+)([012r])(.*)$/);
   return `<div class="row">${[...m[1]].map(c=>`<span class="c ${GUIDE[c]}"></span>`).join('')}<label><input ${m[2]==='r'?'type="radio" name="preset"':'type="checkbox"'+(m[2]==='1'?' checked':'')+(m[2]==='2'?' class="mix"':'')}>${m[3]}</label></div>`;}).join('')}</div>`,
 root=>root.querySelectorAll('.mix').forEach(i=>i.indeterminate=true));

/* ---------- joint drawing ---------- */
const INK='#3434a0',TEAL='#0e8478';
const ln=(d,w=1)=>P(d,INK,'none',w);
const tip=(x,y,a,l=9)=>`<path d="M0 0L${-l} -3V3z" fill="#000080" transform="translate(${x} ${y}) rotate(${a})"/>`;
const tx=(x,y,t,r)=>`<text text-anchor="middle" x="0" y="${r?5:4}" transform="translate(${x} ${y})${r?' rotate(-90)':''}" font-size="13" fill="#2c2c98" font-family="Liberation Sans">${t}</text>`;
const dimH=(a,b,y,t)=>{const m=(a+b)/2-.5,h=t.length*3.100+2;return ln(`M${a} ${y}H${m-h}M${m+h} ${y}H${b}`)+tip(a,y,180,b-a<50?6:9)+tip(b,y,0,b-a<50?6:9)+tx(m,y,t);};
const dimV=(a,b,x,t)=>{const m=(a+b)/2,h=t.length*3.100+2;return b-a<32?tx(x,m,t,1):ln(`M${x} ${a}V${m-h}M${x} ${m+h}V${b}`)+tip(x,a,-90)+tip(x,b,90)+tx(x,m,t,1);};
const dash=(d,c='#4fa88a',w=1.500,a='9 7')=>P(d,`${c}" stroke-dasharray="${a}`,'none',w);
const hole=(x,y)=>dash(`M${x-16} ${y}h33M${x} ${y-16}v33`,'#74bd98',1,'5 2 1 2')+C(x,y,9.500,'#fcfcff',TEAL,1.600)+dash(`M${x-5} ${y}h10M${x} ${y-5}v10`,'#58ae98',1,'3 1.500');
define('joint-drawing',`:host{display:block;flex:1;min-height:0;background:#fff}svg{display:block;width:100%;height:100%}`,
 `<svg role="img" aria-label="Platine d'about"><g transform="translate(-642 -207)">
 ${R(658,208,2,559,'#c8c8c8')}${R(848,207,2,1,TEAL)}${R(937,207,1,1,TEAL)}${R(947,207,1,1,TEAL)}${R(1046,207,1,1,TEAL)}
 <rect x="713" y="251.500" width="176.500" height="441" fill="#ffff9c" stroke="${TEAL}" stroke-width="1.800"/>
 ${dash('M713 316.500h176M713 669.500h176')}${dash('M713 328.500h70Q797 329 797 346V638Q797 656 779 656.500H713')}${dash('M889 328.500h-66Q805 329 805 346V638Q806 656 821 656.500H889')}
 ${[[754,281],[848,281],[754,363],[848,363],[754,622],[848,622]].map(a=>hole(...a)).join('')}
 ${P('M848 281l9 3-2 5z','','#000070')}
 ${ln('M713.500 229v17M754.500 229v17M848.500 229v17')}${dimH(713,754,233.500,'35.0')}${dimH(754,848,233.500,'80.0')}
 ${ln('M690 251.500h18M690 281.500h18M690 363.500h18M690 622.500h18M690 692.500h18')}${dimV(252,281,695.500,'25.0')}${dimV(281,363,695.500,'70.0')}${dimV(363,622,695.500,'220.0')}${dimV(622,692,695.500,'60.0')}
 ${ln('M894 251.500h53M894 692.500h53')}${dimV(252,692,942.500,'375.0')}
 ${ln('M881 304l26 19.500h12')}<text x="920" y="329" font-size="15" font-weight="700" fill="#0a0a5c" font-family="Liberation Sans">6 x M16</text>
 ${ln('M712.500 698v52M889.500 698v52')}${dimH(713,889,746,'150.0')}
 <rect x="1026.500" y="252.500" width="160" height="388" fill="#ffff9c" stroke="${TEAL}" stroke-width="1.800"/>
 ${P('M1032.500 252v79M1180.500 252v79',TEAL)}${dash('M1032.500 331V614.500M1180.500 614.500V331',TEAL,1.200,'11 5')}${dash('M1032 614.500H1180')}
 ${dash('M1084.500 252V602M1129.500 252V602','#a6d88c',1.200,'14 5')}${dash('M1103.500 252v70M1110.500 252v70','#a6d88c',1.500)}
 ${dash('M1032 318.500h148')}${dash('M1032 330.500h54Q1103 332 1103 348V586Q1102 602 1085 602.500H1032')}${dash('M1180 330.500h-54Q1111 332 1110.500 348V586Q1112 602 1126 602.500H1180')}
 ${[[1057,283],[1155.500,283],[1057,369.500],[1155.500,369.500],[1057,566.500],[1155.500,566.500]].map(a=>hole(...a)).join('')}
 ${P('M1156 282l9 4-2 5z','','#000070')}
 ${ln('M1026.500 230v17M1057.500 230v17M1155.500 230v17')}${tx(1042,234.500,'25.0')}${dimH(1058,1155,234.500,'80.0')}
 ${ln('M1003 252.500h19M1003 283.500h19M1003 369.500h19M1003 566.500h19M1003 640.500h19')}${dimV(252,283,1008,'25.0')}${dimV(283,369,1008,'70.0')}${dimV(369,566,1008,'160.0')}${dimV(566,640,1008,'60.0')}
 ${ln('M1192 252.500h55M1192 640.500h55')}${dimV(252,640,1242,'315.0')}
 ${ln('M1185 306l24 20h12')}<text x="1222" y="331" font-size="15" font-weight="700" fill="#0a0a5c" font-family="Liberation Sans">6 x M16</text>
 ${ln('M1026.500 645v56M1186.500 645v56')}${dimH(1027,1186,695.500,'130.0')}
 </g></svg>`);

const dlgBtn=`button{font:11px/18px Roboto,sans-serif;color:#000;background:#e1e1e1;border:1px solid #adadad;padding:0;height:21px}
 button.i{width:25px;display:grid;place-items:center}button rf-icon{width:17px;height:17px}`;
const ib=(n,c='')=>`<button class="i ${c}" aria-label="${n}"><rf-icon name="${n}"></rf-icon></button>`;
define('drawing-tools',`:host{display:flex;flex:none;height:30px;align-items:center;gap:5px;padding:0 4px 0 2px;background:#f0f3f9}
 ${dlgBtn}.on{background:#cce4f7;border-color:#0a5a9c}.gap{margin-left:5px}.views{display:flex;gap:4px}.end{display:flex;gap:2px;margin-left:auto}`,
 ib('dim-x','on')+ib('dim-a')+ib('axis-x','gap')+ib('axis-minus-x')+ib('axis-y')+ib('axis-minus-y')+`<div class="views">${ib('axis-z')+ib('axis-minus-z')+ib('cube')}</div>`+ib('search-off','gap')+ib('layers')+`<div class="end">${ib('dxf')+ib('print-blue')}</div>`);

define('joints-dialog',`
 :host{display:flex;flex-direction:column;background:#f0f0f0;box-shadow:0 2px 14px 2px rgba(0,0,0,.45)}
 .title{height:25px;background:#0078d7;color:#fff;display:flex;align-items:center;padding:0 9px 0 3px}.title span{flex:1}
 .title svg{width:11px;height:11px;stroke:#fff}
 menu-bar{--gap:14px;height:21px;background:#fff;padding:0 7px}a{color:#000;text-decoration:none}
 .body{flex:1;min-height:0;display:flex;gap:3px;padding:2px 1px 0}
 .left{width:176px;display:flex;flex-direction:column;padding-top:1px}
 .main{flex:1;min-width:0;display:flex;flex-direction:column;border:1px solid #a0a0a0;border-width:2px 1px 1px 0;padding:0 4px 8px 1px}
 h2{margin:0;font:12px/20px Roboto,sans-serif;background:#bfcddb;padding-left:1px}
 .cols{flex:1;min-height:0;display:flex;gap:8px;padding:9px 5px 0 7px}
 .pic{flex:1;min-width:0;display:flex;flex-direction:column;border:1px solid #999;border-right-color:#a4a4ea;border-bottom-color:#a4a4ea}
 footer{display:flex;height:39px;align-items:center;padding:4px 10px 0 9px;gap:9px}.pair{display:flex;gap:5px}
 ${dlgBtn}footer .t{width:81px}footer .s{width:73px}button.ok{border:2px solid #0078d7;margin-left:auto}
 button.calc{margin-left:73px}button.view{margin-left:90px}
 button:disabled{background:#ccc;color:#888;border-color:#bfbfbf}
 .st{height:21px;border-top:1px solid #999;border-bottom:1px solid #fff;margin:0 2px 2px 0}`,
 `<div class="title"><span><slot></slot></span><svg><path d="M.5.5l10 10M10.500.5l-10 10"/></svg></div>
 <menu-bar><a href="#">Fichier</a><a href="#">Configuration</a><a href="#">Aide</a></menu-bar>
 <div class="body"><div class="left"><node-table></node-table><dialog-nav></dialog-nav></div>
 <div class="main"><h2>4.1 Graphique</h2><div class="cols"><part-tree></part-tree><div class="pic"><joint-drawing></joint-drawing><drawing-tools></drawing-tools></div></div></div></div>
 <footer>${ib('help')}<div class="pair">${ib('go-back')}${ib('go-next')}</div><button class="t calc" disabled>Calcul</button><button class="t">Détails</button><button class="t">Annexe nat…</button><button class="t view">Graphique</button><button class="s ok">OK</button><button class="s">Annuler</button></footer>
 <div class="st"></div>`);

const ROW1=': new-file open archive-open archive-save save clipboard print preview | undo redo | select-para select-ellipse select-ring select-plus select-window | *table-nav *table | new-load slot prev next *view-loads *view-values view-results result-values | glasses loads-window loads : hand-grid grid-snap *plane-xy plane-yz plane-xz grid-red axis-window | renumber rotate mirror cross-nodes info settings-img gears : import-screen export-screen import-pdf export-pdf';
const ROW2=': new-node v new-line new-member v new-poly v | support line-support surface-support | dimension v comment frame-grid | new-surface v opening v intersect v solid new-solid v | coupling v nodal-load member-load line-load free-load solid-load v : pan zoom-window zoom-reset cube cube-part | axis-x axis-y axis-z axis-minus-x v visibility v | render v : deform disabled-tool | member-forces surface-res solid-res reaction section-res windows v influence result-table | report script v colors v';
define('app-window',`
 :host{display:flex;flex-direction:column;height:100vh;position:relative;border:1px solid #3a343a;background:#cdd2dc;overflow:hidden}
 .menus{display:flex;align-items:center;height:24px;padding:0 4px;color:#4d545f}
 .grip{width:3px;height:14px;margin-right:3px;background:repeating-linear-gradient(#a9aeb9 0 2px,#f4f6fa 2px 4px)}
 .menus menu-bar{flex:1;margin-left:10px}.menus svg{width:44px;height:12px;fill:none;stroke:#777}a{color:inherit;text-decoration:none}u{text-underline-offset:2px}
 .work{flex:1;min-height:0;display:flex;padding-left:1px;gap:4px}work-area{flex:1}
 joints-dialog{position:absolute;left:219px;top:126px;right:17px;bottom:108px}`,
 `<title-bar>RFEM 5.24.01 x64 - [001626-model-file-rf5, CC1*]</title-bar>
 <div class="menus"><span class="grip"></span><rf-icon name="bridge"></rf-icon><menu-bar>${['Fic_hier','_Modifier','_Afficher','_Insérer','_Calculer','_Résultats','_Outils','_Tableau','O_ptions','Mod_ules additionnels','_Fenêtre','Ai_de'].map(m=>`<a href="#">${m.replace(/_(.)/,'<u>$1</u>')}</a>`).join('')}</menu-bar><svg><path d="M1 10h7" stroke-width="2"/><path d="M17.500 5.500h6v5h-6zM19.500 5V2.500h6v5H24"/><path d="M34 2l8 8M42 2l-8 8" stroke-width="2"/></svg></div>
 <tool-bar items="${ROW1}"><load-case></load-case></tool-bar><tool-bar items="${ROW2}"></tool-bar>
 <div class="work"><project-nav></project-nav><work-area></work-area></div>
 <status-bar></status-bar>
 <joints-dialog>RF-JOINTS - [001626-model-file-rf5]</joints-dialog>`);
</script>
</body>
</html>
